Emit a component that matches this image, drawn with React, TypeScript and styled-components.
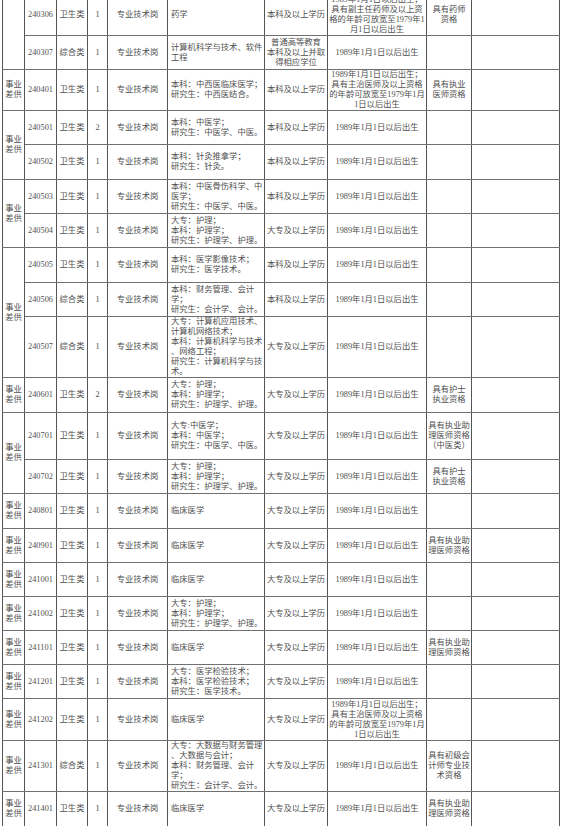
import * as React from 'react';
import styled, { createGlobalStyle } from 'styled-components';

const GlobalStyle = createGlobalStyle`
  html, body {
    margin: 0;
    padding: 0;
    background: #fff;
    overflow: hidden;
  }
`;

type Align = 'left' | 'center';

interface IRow {
  group?: number; // rowSpan of the 事业差供 cell starting here; 0 = covered by a previous cell
  code: string;
  kind: string;
  count: string;
  major: string[];
  edu: string[];
  age: string[];
  qual: string[];
  h: number;
}

const AGE = ['1989年1月1日以后出生'];
const AGE_PHARM = ['1989年1月1日以后出生；', '具有副主任药师及以上资', '格的年龄可放宽至1979年1', '月1日以后出生'];
const AGE_DOC = ['1989年1月1日以后出生；', '具有主治医师及以上资格', '的年龄可放宽至1979年1月', '1日以后出生'];
const BK = ['本科及以上学历'];
const DZ = ['大专及以上学历'];
const NURSE = ['大专：护理；', '本科：护理学；', '研究生：护理学、护理。'];
const CLIN = ['临床医学'];
const ASSIST = ['具有执业助', '理医师资格'];

const ROWS: IRow[] = [
  { group: -1, code: '240306', kind: '卫生类', count: '1', major: ['药学'], edu: BK, age: AGE_PHARM, qual: ['具有药师', '资格'], h: 41 },
  { group: 0, code: '240307', kind: '综合类', count: '1', major: ['计算机科学与技术、软件', '工程'], edu: ['普通高等教育', '本科及以上并取', '得相应学位'], age: AGE, qual: [], h: 34 },
  { group: 1, code: '240401', kind: '卫生类', count: '1', major: ['本科：中西医临床医学；', '研究生：中西医结合。'], edu: BK, age: AGE_DOC, qual: ['具有执业', '医师资格'], h: 41 },
  { group: 2, code: '240501', kind: '卫生类', count: '2', major: ['本科：中医学；', '研究生：中医学、中医。'], edu: BK, age: AGE, qual: [], h: 34 },
  { group: 0, code: '240502', kind: '卫生类', count: '1', major: ['本科：针灸推拿学；', '研究生：针灸。'], edu: BK, age: AGE, qual: [], h: 35 },
  { group: 2, code: '240503', kind: '卫生类', count: '1', major: ['本科：中医骨伤科学、中', '医学；', '研究生：中医学、中医。'], edu: BK, age: AGE, qual: [], h: 34 },
  { group: 0, code: '240504', kind: '卫生类', count: '1', major: NURSE, edu: DZ, age: AGE, qual: [], h: 34 },
  { group: 3, code: '240505', kind: '卫生类', count: '1', major: ['本科：医学影像技术；', '研究生：医学技术。'], edu: BK, age: AGE, qual: [], h: 35 },
  { group: 0, code: '240506', kind: '综合类', count: '1', major: ['本科：财务管理、会计', '学；', '研究生：会计学、会计。'], edu: BK, age: AGE, qual: [], h: 34 },
  { group: 0, code: '240507', kind: '综合类', count: '1', major: ['大专：计算机应用技术、', '计算机网络技术；', '本科：计算机科学与技术', '、网络工程；', '研究生：计算机科学与技', '术。'], edu: DZ, age: AGE, qual: [], h: 61 },
  { group: 1, code: '240601', kind: '卫生类', count: '2', major: NURSE, edu: DZ, age: AGE, qual: ['具有护士', '执业资格'], h: 35 },
  { group: 2, code: '240701', kind: '卫生类', count: '1', major: ['大专:中医学；', '本科：中医学；', '研究生：中医学、中医。'], edu: DZ, age: AGE, qual: ['具有执业助', '理医师资格', '（中医类）'], h: 47 },
  { group: 0, code: '240702', kind: '卫生类', count: '1', major: NURSE, edu: DZ, age: AGE, qual: ['具有护士', '执业资格'], h: 34 },
  { group: 1, code: '240801', kind: '卫生类', count: '1', major: CLIN, edu: DZ, age: AGE, qual: [], h: 35 },
  { group: 1, code: '240901', kind: '卫生类', count: '1', major: CLIN, edu: DZ, age: AGE, qual: ASSIST, h: 34 },
  { group: 1, code: '241001', kind: '卫生类', count: '1', major: CLIN, edu: DZ, age: AGE, qual: [], h: 34 },
  { group: 1, code: '241002', kind: '卫生类', count: '1', major: NURSE, edu: DZ, age: AGE, qual: [], h: 34 },
  { group: 1, code: '241101', kind: '卫生类', count: '1', major: CLIN, edu: DZ, age: AGE, qual: ASSIST, h: 34 },
  { group: 1, code: '241201', kind: '卫生类', count: '1', major: ['大专：医学检验技术；', '本科：医学检验技术；', '研究生：医学技术。'], edu: DZ, age: AGE, qual: [], h: 34 },
  { group: 1, code: '241202', kind: '卫生类', count: '1', major: CLIN, edu: DZ, age: AGE_DOC, qual: [], h: 42 },
  { group: 1, code: '241301', kind: '综合类', count: '1', major: ['大专：大数据与财务管理', '、大数据与会计；', '本科：财务管理、会计', '学；', '研究生：会计学、会计。'], edu: DZ, age: AGE, qual: ['具有初级会', '计师专业技', '术资格'], h: 50 },
  { group: 1, code: '241401', kind: '卫生类', count: '1', major: CLIN, edu: DZ, age: AGE, qual: ASSIST, h: 34 },
];

const WIDTHS = [22, 32, 31, 20, 60, 97, 63, 99, 45, 88];

const Lines = ({ lines }: { lines: string[] }) => (
  <>
    {lines.map((l, i) => (
      <Line key={i}>{l}</Line>
    ))}
  </>
);

const App = () => (
  <>
    <GlobalStyle />
    <Page>
      <Sheet>
        <colgroup>
          {WIDTHS.map((w, i) => (
            <col key={i} style={{ width: w }} />
          ))}
        </colgroup>
        <tbody>
          {ROWS.map((r, i) => (
            <Row key={r.code} $h={r.h} $last={i === ROWS.length - 1}>
              {r.group === -1 && <Cell rowSpan={2} />}
              {r.group !== undefined && r.group > 0 && (
                <Cell rowSpan={r.group}>
                  <Line>事业</Line>
                  <Line>差供</Line>
                </Cell>
              )}
              <Cell>{r.code}</Cell>
              <Cell>{r.kind}</Cell>
              <Cell>{r.count}</Cell>
              <Cell>专业技术岗</Cell>
              <Cell $align="left">
                <Lines lines={r.major} />
              </Cell>
              <Cell>
                <Lines lines={r.edu} />
              </Cell>
              <Cell>
                <Lines lines={r.age} />
              </Cell>
              <Cell>
                <Lines lines={r.qual} />
              </Cell>
              <Cell />
            </Row>
          ))}
        </tbody>
      </Sheet>
    </Page>
  </>
);

const Page = styled.div`
  width: 562px;
  height: 827px;
  overflow: hidden;
  background: #fff;
  padding-left: 2px;
  box-sizing: border-box;
`;

const Sheet = styled.table`
  width: 557px;
  margin-top: -6px;
  border-collapse: collapse;
  table-layout: fixed;
  font-family: 'Liberation Serif', 'Noto Sans CJK SC', serif;
  font-size: 8.3px;
  line-height: 10px;
  color: #505050;
`;

const Row = styled.tr<{ $h: number; $last?: boolean }>`
  height: ${p => p.$h}px;

  & > td {
    border-bottom-color: ${p => (p.$last ? 'transparent' : '#707070')};
  }
`;

const Cell = styled.td<{ $align?: Align }>`
  border: 1px solid #555;
  padding: 0 ${p => (p.$align === 'left' ? '1px 0 3px' : '1px')};
  text-align: ${p => p.$align || 'center'};
  vertical-align: middle;
  overflow: hidden;
  white-space: nowrap;
`;

const Line = styled.div`
  white-space: nowrap;
`;

export default App;
